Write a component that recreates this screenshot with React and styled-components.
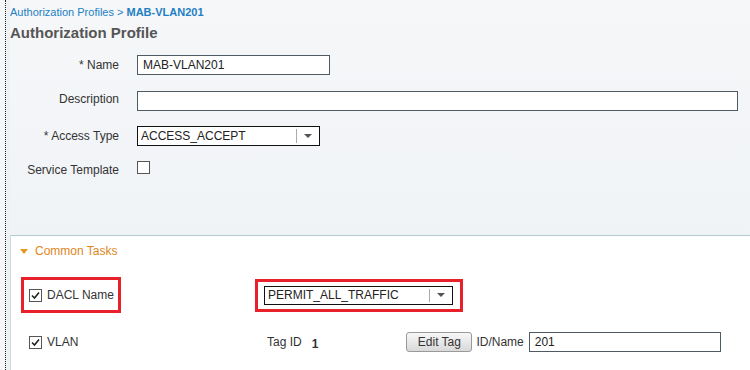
import React from "react";
import styled, { createGlobalStyle } from "styled-components";

const GlobalStyle = createGlobalStyle`
  body {
    margin: 0;
    background: #f4f6f8;
    font-family: "Liberation Sans", Arial, sans-serif;
    color: #333;
  }
`;

const Page = styled.div`
  display: flex;
  width: 750px;
  height: 370px;
  overflow: hidden;
`;
const Gutter = styled.div`
  margin-left: 5px;
  width: 4px;
  border-left: 1px dotted #222;
  background: #eef1f4;
`;
const Main = styled.div`
  flex: 1;
  display: flex;
  flex-direction: column;
  min-width: 0;
`;
const Header = styled.div`
  background: linear-gradient(#f6f7f9, #f0f3f6);
  height: 235px;
  box-sizing: border-box;
  padding-top: 6px;
`;
const Crumbs = styled.div`
  font-size: 11px;
  color: #1d80c3;
  height: 13px;
  line-height: 13px;
`;
const CrumbCurrent = styled.span`
  font-weight: bold;
`;
const Title = styled.h1`
  margin: 5px 0 0;
  font-size: 15px;
  font-weight: bold;
  color: #555;
  line-height: 18px;
`;
const Form = styled.div`
  display: grid;
  grid-template-columns: 109px 1fr;
  column-gap: 18px;
  grid-auto-rows: 35px;
  margin-top: 13px;
`;
const Label = styled.div`
  text-align: right;
  font-size: 12px;
  line-height: 14px;
  padding-top: ${(p) => p.$top || 3}px;
  color: #333;
`;
const Field = styled.div`
  display: flex;
  align-items: flex-start;
  padding-top: ${(p) => p.$top || 0}px;
`;
const TextInput = styled.div`
  width: ${(p) => p.$width}px;
  height: 20px;
  box-sizing: border-box;
  border: 1px solid #4f5b63;
  background: #fff;
  font-size: 12px;
  line-height: 18px;
  padding-left: 5px;
  color: #222;
  margin-left: ${(p) => p.$left || 0}px;
`;
const Select = styled.div`
  display: flex;
  width: ${(p) => p.$width}px;
  height: ${(p) => p.$height || 20}px;
  box-sizing: border-box;
  border: 1px solid #111;
  background: #fff;
  font-size: 12px;
`;
const SelectText = styled.div`
  flex: 1;
  padding-left: 3px;
  display: flex;
  align-items: center;
  color: #222;
`;
const SelectArrow = styled.div`
  width: 22px;
  border-left: 1px solid #aaa;
  margin: 2px 0;
  display: flex;
  align-items: center;
  justify-content: center;
  &::after {
    content: "";
    border-left: 4px solid transparent;
    border-right: 4px solid transparent;
    border-top: 4px solid #555;
  }
`;
const Box = styled.span`
  display: inline-flex;
  align-items: center;
  justify-content: center;
  width: 13px;
  height: 13px;
  box-sizing: border-box;
  border: 1px solid #555;
  background: #fff;
  flex-shrink: 0;
`;

const Checkbox = ({ checked }) => (
  <Box>
    {checked && (
      <svg width="9" height="9" viewBox="0 0 9 9">
        <path d="M1 4.5 L3.5 7 L8 1.5" fill="none" stroke="#222" strokeWidth="1.6" />
      </svg>
    )}
  </Box>
);

const Tasks = styled.div`
  flex: 1;
  background: #fff;
  border-top: 1px solid #b3cbd3;
  border-left: 1px solid #cfd9de;
`;
const TasksHeader = styled.div`
  display: flex;
  align-items: center;
  gap: 7px;
  padding: 7px 0 0 9px;
  height: 16px;
  font-size: 12px;
  color: #e0861c;
`;
const Triangle = styled.span`
  border-left: 4px solid transparent;
  border-right: 4px solid transparent;
  border-top: 5px solid #e39a1f;
`;
const TaskRow = styled.div`
  display: flex;
  align-items: center;
  height: ${(p) => p.$height}px;
  margin-top: ${(p) => p.$top}px;
`;
const TaskCell = styled.div`
  width: 244px;
  display: flex;
  align-items: center;
  padding-left: ${(p) => p.$pad || 0}px;
  box-sizing: border-box;
`;
const Highlight = styled.div`
  display: flex;
  align-items: center;
  gap: 5px;
  border: 3px solid #e8202a;
  padding: ${(p) => p.$pad};
  width: ${(p) => (p.$width ? `${p.$width}px` : "auto")};
  height: ${(p) => p.$height}px;
  box-sizing: border-box;
  white-space: nowrap;
`;
const CheckItem = styled.div`
  display: flex;
  align-items: center;
  gap: 5px;
`;
const TaskLabel = styled.span`
  font-size: 12px;
  color: #333;
`;
const VlanGroup = styled.div`
  display: flex;
  align-items: center;
  padding-left: 12px;
  font-size: 12px;
`;
const TagValue = styled.span`
  margin-left: 10px;
  margin-right: 88px;
  font-weight: bold;
  font-size: 12px;
  padding-top: 3px;
`;
const Button = styled.button`
  width: 66px;
  height: 20px;
  border: 1px solid #9a9a9a;
  border-radius: 3px;
  background: linear-gradient(#f7f7f7, #d9d9d9);
  font-family: "Liberation Sans", Arial, sans-serif;
  font-size: 12px;
  color: #333;
  padding: 0;
  margin-right: 4px;
`;

export default function App() {
  return (
    <>
      <GlobalStyle />
      <Page>
        <Gutter />
        <Main>
          <Header>
            <Crumbs>
              Authorization Profiles &gt; <CrumbCurrent>MAB-VLAN201</CrumbCurrent>
            </Crumbs>
            <Title>Authorization Profile</Title>
            <Form>
              <Label>* Name</Label>
              <Field>
                <TextInput $width={193}>MAB-VLAN201</TextInput>
              </Field>
              <Label $top={2}>Description</Label>
              <Field $top={1}>
                <TextInput $width={601} />
              </Field>
              <Label $top={4}>* Access Type</Label>
              <Field $top={1}>
                <Select $width={183}>
                  <SelectText>ACCESS_ACCEPT</SelectText>
                  <SelectArrow />
                </Select>
              </Field>
              <Label $top={3}>Service Template</Label>
              <Field $top={1}>
                <Checkbox />
              </Field>
            </Form>
          </Header>
          <Tasks>
            <TasksHeader>
              <Triangle />
              Common Tasks
            </TasksHeader>
            <TaskRow $height={36} $top={18}>
              <TaskCell $pad={10}>
                <Highlight $pad="0 0 0 5px" $width={100} $height={36}>
                  <Checkbox checked />
                  <TaskLabel>DACL Name</TaskLabel>
                </Highlight>
              </TaskCell>
              <Highlight $pad="0 7px 0 6px" $height={33}>
                <Select $width={189} $height={19}>
                  <SelectText>PERMIT_ALL_TRAFFIC</SelectText>
                  <SelectArrow />
                </Select>
              </Highlight>
            </TaskRow>
            <TaskRow $height={20} $top={19}>
              <TaskCell $pad={18}>
                <CheckItem>
                  <Checkbox checked />
                  <TaskLabel>VLAN</TaskLabel>
                </CheckItem>
              </TaskCell>
              <VlanGroup>
                Tag ID
                <TagValue>1</TagValue>
                <Button>Edit Tag</Button>
                ID/Name
                <TextInput $width={192} $left={5}>201</TextInput>
              </VlanGroup>
            </TaskRow>
          </Tasks>
        </Main>
      </Page>
    </>
  );
}
